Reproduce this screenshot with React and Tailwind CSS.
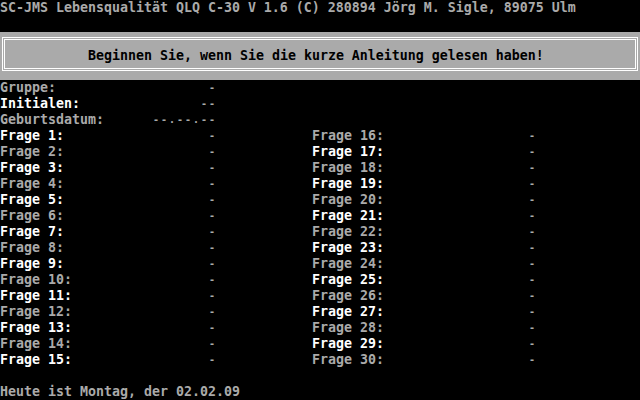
import React from 'react';

const GRAY = 'text-[#aaaaaa]';
const WHITE = 'text-white';

const Row = ({ children, className = '' }) => (
    <div className={`h-[16px] leading-[16px] whitespace-pre ${className}`}>{children}</div>
);

// VGA-Strich ist schmaler als der Bindestrich der Schrift
const Dash = ({ children = '-' }) => (
    <span className={`inline-block w-[8px] text-center align-top text-[10px] leading-[16px] ${GRAY}`}>{children}</span>
);

const FrageRow = ({ n }) => {
    const left = n;
    const right = n + 15;
    return (
        <Row>
            <span className={`inline-block w-[208px] ${left % 2 ? WHITE : GRAY}`}>{`Frage ${left}:`}</span>
            <span className="inline-block w-[104px]"><Dash /></span>
            <span className={`inline-block w-[216px] ${right % 2 ? WHITE : GRAY}`}>{`Frage ${right}:`}</span>
            <Dash />
        </Row>
    );
};

export default function App() {
    const rows = Array.from({ length: 15 }, (_, i) => i + 1);
    const datum = '--.--.--'.split('');

    return (
        <div
            className="w-[640px] h-[400px] bg-black overflow-hidden font-bold text-[13.29px]"
            style={{ fontFamily: '"DejaVu Sans Mono", "Liberation Mono", monospace' }}
        >
            <Row className={GRAY}>SC-JMS Lebensqualität QLQ C-30 V 1.6 (C) 280894 Jörg M. Sigle, 89075 Ulm</Row>
            <Row />

            {/* Hinweis-Box */}
            <div className="h-[48px] bg-[#aaaaaa] pt-[5px] px-[2px]">
                <div className="h-[34px] border border-white p-[1px]">
                    <div className="h-[30px] border border-white pt-[8px] pl-[83px]">
                        <Row className="text-black">Beginnen Sie, wenn Sie die kurze Anleitung gelesen haben!</Row>
                    </div>
                </div>
            </div>

            <Row>
                <span className={`inline-block w-[208px] ${GRAY}`}>Gruppe:</span>
                <Dash />
            </Row>
            <Row>
                <span className={`inline-block w-[200px] ${WHITE}`}>Initialen:</span>
                <Dash />
                <Dash />
            </Row>
            <Row>
                <span className={`inline-block w-[152px] ${GRAY}`}>Geburtsdatum:</span>
                {datum.map((c, i) => (
                    <Dash key={i}>{c}</Dash>
                ))}
            </Row>

            {rows.map((n) => (
                <FrageRow key={n} n={n} />
            ))}

            <Row />
            <Row className={GRAY}>Heute ist Montag, der 02.02.09</Row>
        </div>
    );
}
